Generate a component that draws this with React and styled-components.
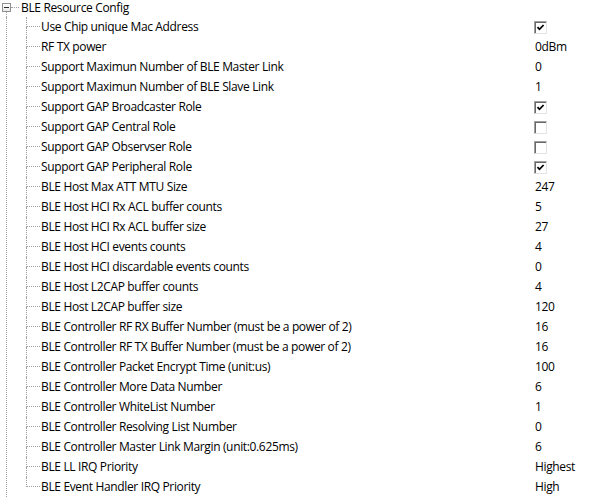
import React from 'react';
import styled, { createGlobalStyle } from 'styled-components';

const GlobalStyle = createGlobalStyle`
  html, body {
    margin: 0;
    padding: 0;
    background: #ffffff;
    overflow: hidden;
  }
  body {
    font-family: "Open Sans", "Noto Sans", sans-serif;
    font-size: 12px;
    letter-spacing: -0.35px;
    color: #000000;
  }
`;

const Tree = styled.div`
  width: 592px;
  height: 497px;
  overflow: hidden;
`;

const RootRow = styled.div`
  display: flex;
  align-items: flex-start;
  height: 17px;
`;

const RootGutter = styled.div`
  display: flex;
  flex-direction: column;
  align-self: stretch;
  margin-left: 2px;
  width: 9px;
`;

const Spacer = styled.div`
  height: 3px;
`;

const Segment = styled.div`
  flex: 1;
  margin-left: 4px;
  border-left: 1px dotted #a0a0a0;
`;

const Toggle = styled.div`
  box-sizing: border-box;
  width: 9px;
  height: 9px;
  border: 1px solid #919191;
  background: linear-gradient(#ffffff, #e8e8e8);
  display: flex;
  align-items: center;
  justify-content: center;

  &::after {
    content: '';
    width: 5px;
    height: 1px;
    background: #2b2b2b;
  }
`;

const Stub = styled.div`
  width: 8px;
  margin-top: 7px;
  margin-right: 2px;
  border-top: 1px dotted #a0a0a0;
`;

const RootLabel = styled.div`
  white-space: nowrap;
  line-height: 15px;
`;

const Children = styled.div`
  display: flex;
`;

const Rail = styled.div`
  width: 19px;
  margin-left: 6px;
  border-left: 1px dotted #a0a0a0;
`;

const List = styled.div`
  flex: 1;
  display: flex;
  flex-direction: column;
`;

const Row = styled.div`
  display: flex;
  align-items: center;
  height: 20px;
`;

const Gutter = styled.div`
  display: flex;
  flex-direction: column;
  align-self: stretch;
  width: 14px;
  margin-right: 1px;
`;

const GutterTop = styled.div`
  height: 9px;
  border-left: 1px dotted #a0a0a0;
  border-bottom: 1px dotted #a0a0a0;
`;

const GutterBottom = styled.div`
  flex: 1;
  border-left: 1px dotted ${(p) => (p.$last ? 'transparent' : '#a0a0a0')};
`;

const Label = styled.div`
  flex: 1;
  white-space: nowrap;
  line-height: 20px;
`;

const Value = styled.div`
  width: 57px;
  white-space: nowrap;
  line-height: 20px;
  display: flex;
  align-items: center;
`;

const Check = styled.div`
  box-sizing: border-box;
  width: 13px;
  height: 13px;
  margin-left: -1px;
  border: 1px solid;
  border-color: #a0a0a0 #e3e3e3 #e3e3e3 #a0a0a0;
  box-shadow: inset 1px 1px 0 #696969;
  background: #ffffff;
  display: flex;
  align-items: center;
  justify-content: center;
`;

const items = [
  ['Use Chip unique Mac Address', true],
  ['RF TX power', '0dBm'],
  ['Support Maximun Number of BLE Master Link', '0'],
  ['Support Maximun Number of BLE Slave Link', '1'],
  ['Support GAP Broadcaster Role', true],
  ['Support GAP Central Role', false],
  ['Support GAP Observser Role', false],
  ['Support GAP Peripheral Role', true],
  ['BLE Host Max ATT MTU Size', '247'],
  ['BLE Host HCI Rx ACL buffer counts', '5'],
  ['BLE Host HCI Rx ACL buffer size', '27'],
  ['BLE Host HCI events counts', '4'],
  ['BLE Host HCI discardable events counts', '0'],
  ['BLE Host L2CAP buffer counts', '4'],
  ['BLE Host L2CAP buffer size', '120'],
  ['BLE Controller RF RX Buffer Number (must be a power of 2)', '16'],
  ['BLE Controller RF TX Buffer Number (must be a power of 2)', '16'],
  ['BLE Controller Packet Encrypt Time (unit:us)', '100'],
  ['BLE Controller More Data Number', '6'],
  ['BLE Controller WhiteList Number', '1'],
  ['BLE Controller Resolving List Number', '0'],
  ['BLE Controller Master Link Margin (unit:0.625ms)', '6'],
  ['BLE LL IRQ Priority', 'Highest'],
  ['BLE Event Handler IRQ Priority', 'High'],
];

const CheckBox = ({ checked }) => (
  <Check>
    {checked && (
      <svg width="9" height="9" viewBox="0 0 9 9">
        <path d="M1.5 4.2 L3.5 6.3 L7.6 2" fill="none" stroke="#000" strokeWidth="1.8" />
      </svg>
    )}
  </Check>
);

const App = () => (
  <>
    <GlobalStyle />
    <Tree>
      <RootRow>
        <RootGutter>
          <Spacer />
          <Toggle />
          <Segment />
        </RootGutter>
        <Stub />
        <RootLabel>BLE Resource Config</RootLabel>
      </RootRow>
      <Children>
        <Rail />
        <List>
          {items.map(([name, value], i) => (
            <Row key={name}>
              <Gutter>
                <GutterTop />
                <GutterBottom $last={i === items.length - 1} />
              </Gutter>
              <Label>{name}</Label>
              <Value>
                {typeof value === 'boolean' ? <CheckBox checked={value} /> : value}
              </Value>
            </Row>
          ))}
        </List>
      </Children>
    </Tree>
  </>
);

export default App;
